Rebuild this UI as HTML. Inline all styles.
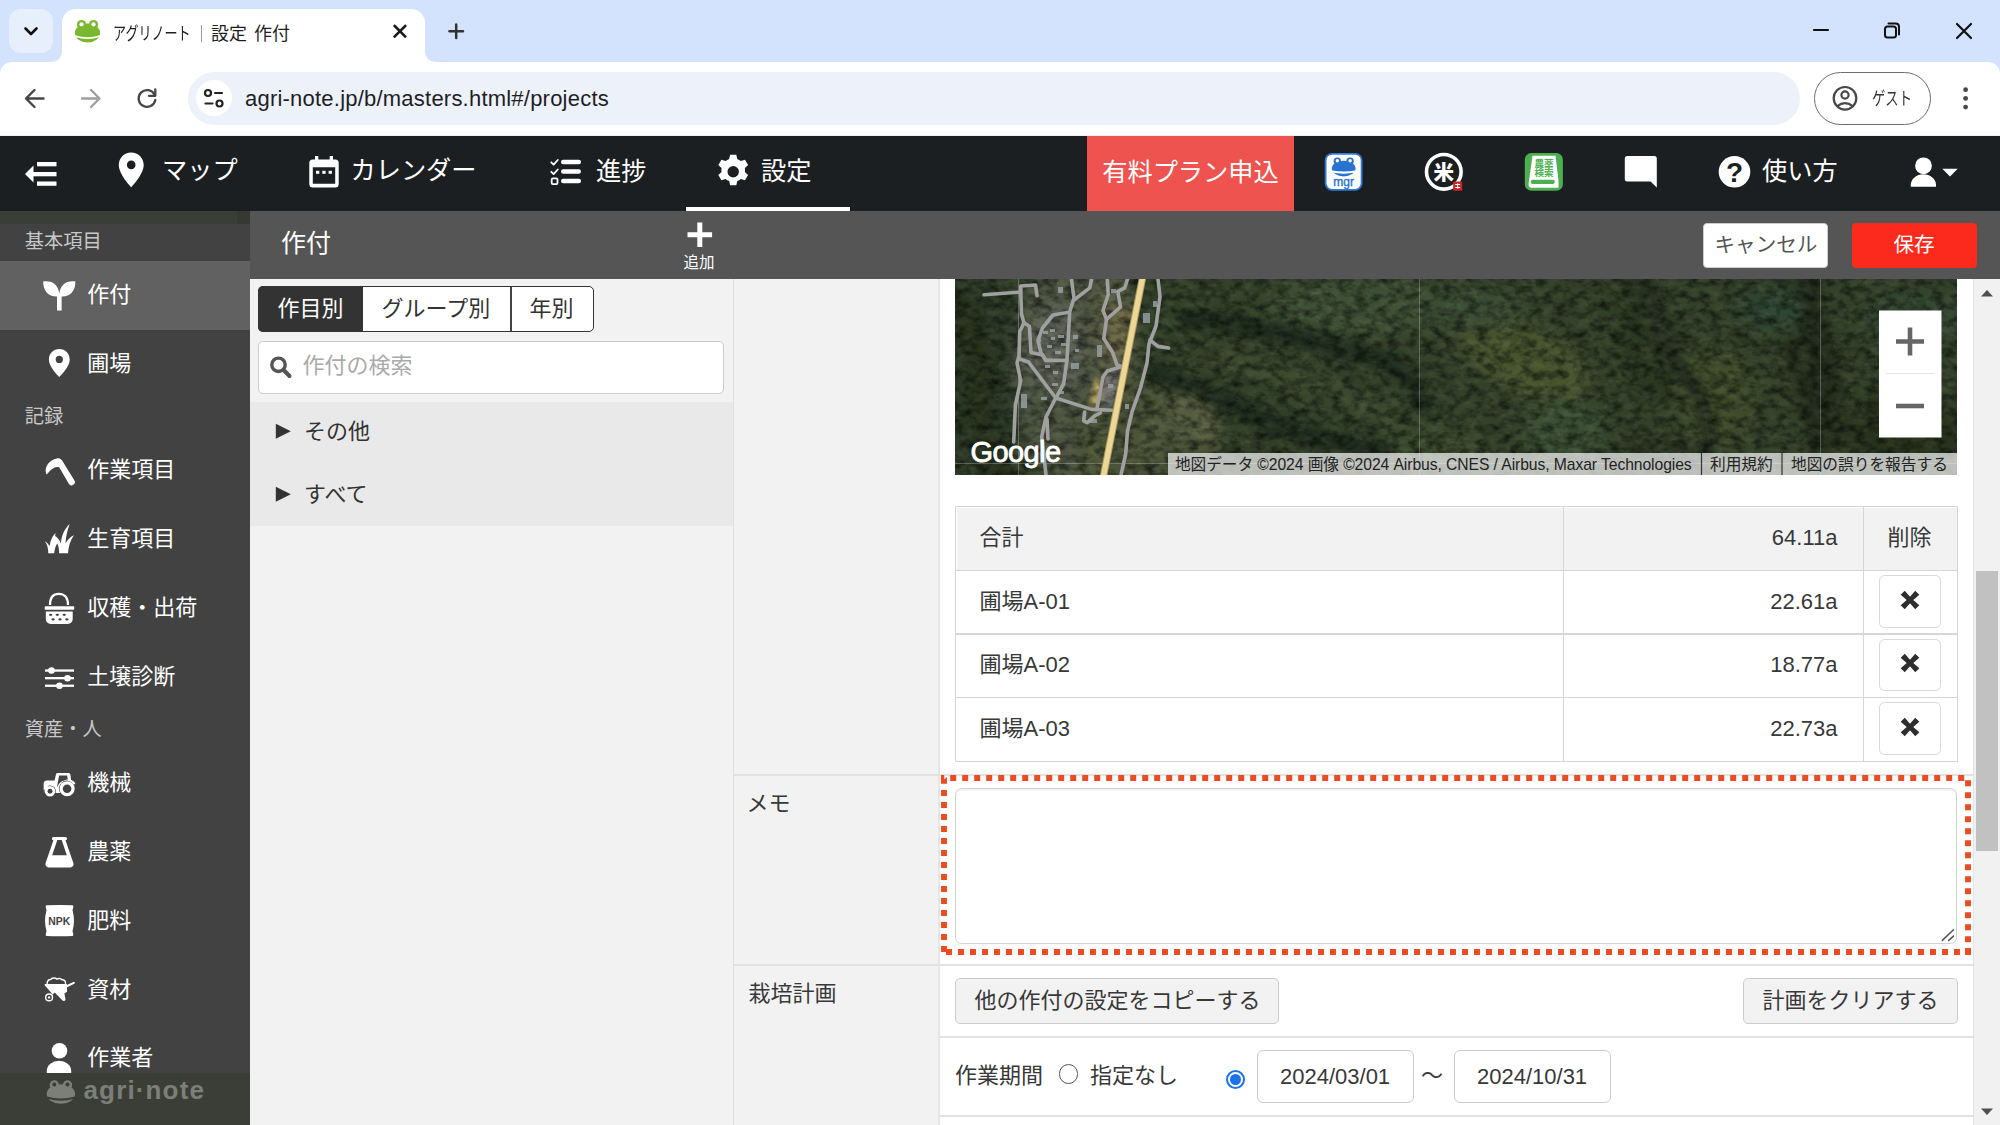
<!DOCTYPE html>
<html lang="ja">
<head>
<meta charset="utf-8">
<title>アグリノート | 設定 作付</title>
<style>
*{box-sizing:border-box;margin:0;padding:0}
html,body{width:2000px;height:1125px;overflow:hidden;background:#fff}
body{position:relative;font-family:"Liberation Sans","Noto Sans CJK JP",sans-serif;color:#333;-webkit-font-smoothing:antialiased}
.abs{position:absolute}
.t{position:absolute;white-space:nowrap;line-height:1}
svg{position:absolute;overflow:visible}
/* chrome */
#tabstrip{left:0;top:0;width:2000px;height:90px;background:#d3e3fd}
#toolbar{left:0;top:62px;width:2000px;height:75px;background:#fff;border-radius:12px 12px 0 0}
#tab{left:62px;top:9px;width:363px;height:53px;background:#fff;border-radius:14px 14px 0 0}
#tabsearch{left:9.400px;top:9.400px;width:43.600px;height:43.600px;border-radius:12px;background:#e7effd}
#urlbar{left:188px;top:72px;width:1612px;height:52.800px;border-radius:26.400px;background:#edf1fa}
#sitebtn{left:196px;top:80px;width:36px;height:36px;border-radius:18px;background:#fff}
#guest{left:1814px;top:72px;width:117px;height:53px;border-radius:27px;border:1.800px solid #6e6e6e;background:#fff}
/* app nav */
#nav{left:0;top:135.400px;width:2000px;height:75.600px;background:#1c1f21;border-top:1px solid #f0f0ee}
.navt{color:#fff;font-size:25.200px}
#paid{left:1087.200px;top:136.400px;width:206.800px;height:74.600px;background:#ef5350}
#underline{left:686px;top:207px;width:164px;height:4px;background:#fff}
/* sidebar */
#side{left:0;top:211px;width:250px;height:914px;background:#424242}
#sidetop{left:0;top:211px;width:250px;height:13px;background:#3b3e37}
#sideactive{left:0;top:261px;width:250px;height:69px;background:#616161}
#sidefoot{left:0;top:1073px;width:250px;height:52px;background:#3b3e37}
.sh{color:#c8c8c8;font-size:19.250px;left:24.800px}
.si{color:#fff;font-size:22px;left:87.300px}
/* header */
#head{left:250px;top:211px;width:1750px;height:68px;background:#555}
#cancel{left:1703px;top:223px;width:125px;height:45px;background:#fff;border-radius:4px;border:1px solid #ccc}
#save{left:1852px;top:223px;width:125px;height:45px;background:#fb2a1c;border-radius:4px}
/* list panel */
#list{left:250px;top:279px;width:483px;height:846px;background:#f2f2f2}
#listitems{left:250px;top:402px;width:483px;height:124px;background:#e9e9e9}
#seg{left:258px;top:286px;width:336px;height:46px;border:1.5px solid #333;border-radius:5px;background:#fff;overflow:hidden}
#seg1{left:258px;top:286px;width:105px;height:46px;background:#333;border-radius:5px 0 0 5px}
#search{left:258px;top:341px;width:466px;height:53px;background:#fff;border:1.5px solid #ccc;border-radius:5px}
/* form */
#labelcol{left:732.500px;top:279px;width:207.500px;height:846px;background:#f2f2f2;border-left:1.500px solid #e0e0e0;border-right:2px solid #e6e6e6}
#scroll{left:1972.500px;top:279px;width:27.500px;height:846px;background:#f1f1f1;border-left:1.500px solid #e4e4e4}
#thumb{left:1976.300px;top:571.300px;width:21.600px;height:280px;background:#c1c1c1}
.hl{position:absolute;height:1.800px;background:#e2e2e2}
.cell{position:absolute;border:1.5px solid #d4d4d4}
.xbtn{position:absolute;width:61.800px;height:52.800px;border:1.600px solid #d9d9d9;border-radius:5.500px;background:#fff}
.btn{position:absolute;height:46px;border:1.5px solid #ccc;border-radius:5px;background:#f2f2f2}
.inp{position:absolute;height:53px;border:1.5px solid #ccc;border-radius:6px;background:#fff}
.ft{font-size:22px;color:#383838}
</style>
</head>
<body>
<!-- CHROME -->
<div id="tabstrip" class="abs"></div>
<div id="toolbar" class="abs"></div>
<div id="tabsearch" class="abs"></div>
<div id="tab" class="abs"></div>
<div id="urlbar" class="abs"></div>
<div id="sitebtn" class="abs"></div>
<div id="guest" class="abs"></div>

<!-- chrome curve joins -->
<svg style="left:0;top:0" width="2000" height="137" viewBox="0 0 2000 137">
  <path d="M50 62 Q62 62 62 50 L62 62 Z" fill="#fff"/>
  <path d="M437 62 Q425 62 425 50 L425 62 Z" fill="#fff"/>
  <!-- tab search chevron -->
  <path d="M25.5 28.5 L31 34 L36.5 28.5" fill="none" stroke="#111" stroke-width="2.6" stroke-linecap="round" stroke-linejoin="round"/>
  <!-- favicon frog -->
  <g fill="#7cb82f">
    <circle cx="81.5" cy="24.5" r="4.6"/><circle cx="93.5" cy="24.5" r="4.6"/>
    <ellipse cx="87.5" cy="33" rx="12.6" ry="9.6"/>
  </g>
  <circle cx="81.5" cy="24.3" r="2.1" fill="#fff"/><circle cx="93.5" cy="24.3" r="2.1" fill="#fff"/>
  <path d="M75.2 35.2 Q87.5 39.2 99.8 35.2 L99.8 37 Q87.5 41 75.2 37 Z" fill="#fff"/>
  <!-- tab close -->
  <path d="M394.700 26 L405.100 36.400 M405.100 26 L394.700 36.400" stroke="#1a1a1a" stroke-width="2.600" stroke-linecap="square"/>
  <!-- new tab plus -->
  <path d="M449.400 31.200 H463 M456.200 24.400 V38" stroke="#333" stroke-width="2.500" stroke-linecap="round"/>
  <!-- window controls -->
  <path d="M1814 30 H1828" stroke="#111" stroke-width="2.2" stroke-linecap="round"/>
  <rect x="1885" y="26.5" width="11" height="11" rx="2.5" fill="none" stroke="#111" stroke-width="2"/>
  <path d="M1888.5 23.6 H1895.5 Q1899 23.6 1899 27 V34.5" fill="none" stroke="#111" stroke-width="2" stroke-linecap="round"/>
  <path d="M1957 24 L1971 38 M1971 24 L1957 38" stroke="#111" stroke-width="2.2" stroke-linecap="round"/>
  <!-- back -->
  <path d="M43.5 98.5 H26.5 M34.5 90 L26 98.5 L34.5 107" fill="none" stroke="#474747" stroke-width="2.4" stroke-linecap="round" stroke-linejoin="round"/>
  <!-- forward -->
  <path d="M82 98.5 H99 M91 90 L99.5 98.5 L91 107" fill="none" stroke="#a0a0a0" stroke-width="2.4" stroke-linecap="round" stroke-linejoin="round"/>
  <!-- reload -->
  <path d="M155.300 100 A8.400 8.400 0 1 1 154.600 94.800" fill="none" stroke="#474747" stroke-width="2.300" stroke-linecap="round"/>
  <path d="M155.300 89.300 V95.800 H149" fill="none" stroke="#474747" stroke-width="2.300" stroke-linecap="round" stroke-linejoin="round"/>
  <!-- tune icon -->
  <g fill="none" stroke="#222" stroke-width="2.2" stroke-linecap="round">
    <circle cx="208" cy="93" r="3"/><path d="M215 93 H222"/>
    <circle cx="219.500" cy="103.500" r="3"/><path d="M205.500 103.500 H212.500"/>
  </g>
  <!-- guest avatar -->
  <g fill="none" stroke="#474747" stroke-width="2.2">
    <circle cx="1845" cy="98.300" r="11.300"/>
    <circle cx="1845" cy="95" r="3.600"/>
    <path d="M1837 106.300 Q1845 100 1853 106.300"/>
  </g>
  <!-- kebab -->
  <circle cx="1965.600" cy="89.700" r="2.400" fill="#474747"/><circle cx="1965.600" cy="98.400" r="2.400" fill="#474747"/><circle cx="1965.600" cy="107.100" r="2.400" fill="#474747"/>
</svg>
<div class="t" id="tabtitle" style="left:113px;top:24.500px;font-size:18px;color:#1f1f1f;transform:scaleX(0.725);transform-origin:0 0">アグリノート</div>
<div class="abs" style="left:200.500px;top:25px;width:1.300px;height:16.500px;background:#9a9a9a"></div>
<div class="t" id="tabtitle2" style="left:211px;top:24.500px;font-size:18px;color:#1f1f1f;word-spacing:2px">設定 作付</div>
<div class="t" id="urltext" style="left:245px;top:87.500px;font-size:22px;letter-spacing:0.220px;color:#1f1f1f">agri-note.jp/b/masters.html#/projects</div>
<div class="t" id="guesttext" style="left:1872px;top:90px;font-size:18px;color:#333;transform:scaleX(0.740);transform-origin:0 0">ゲスト</div>
<!-- NAV -->
<div id="nav" class="abs"></div>
<div id="paid" class="abs"></div>
<div id="underline" class="abs"></div>

<!-- nav icons -->
<svg style="left:0;top:137px" width="2000" height="74" viewBox="0 137 2000 74">
 <g fill="#fff">
  <!-- back-menu -->
  <rect x="37" y="162" width="19.5" height="4.3"/><rect x="33" y="172" width="23.5" height="4.3"/><rect x="37" y="181.500" width="19.5" height="4.3"/>
  <path d="M25 174 L33.500 165.500 V182.500 Z"/>
  <!-- map pin -->
  <path d="M131.200 152.500 C124.300 152.500 118.800 158 118.800 164.900 C118.800 174.200 131.200 187.200 131.200 187.200 C131.200 187.200 143.700 174.200 143.700 164.900 C143.700 158 138.100 152.500 131.200 152.500 Z M131.200 169.200 A4.300 4.300 0 1 1 131.200 160.600 A4.300 4.300 0 1 1 131.200 169.200 Z" fill-rule="evenodd"/>
  <!-- calendar -->
  <path d="M315 156 h3.300 v3.500 h11.400 v-3.500 h3.300 v3.500 h2.200 a3.500 3.500 0 0 1 3.500 3.500 v21 a3.500 3.500 0 0 1 -3.500 3.500 h-22.400 a3.500 3.500 0 0 1 -3.500 -3.500 v-21 a3.500 3.500 0 0 1 3.500 -3.500 h2.200 Z M312.800 167.200 v16.500 h22.400 v-16.500 Z" fill-rule="evenodd"/>
  <rect x="316" y="170.800" width="3.300" height="3"/><rect x="322.300" y="170.800" width="3.300" height="3"/><rect x="328.600" y="170.800" width="3.300" height="3"/>
  <!-- tasks -->
  <rect x="561" y="159.700" width="20" height="4.600" rx="2.300"/><rect x="561" y="169.200" width="20" height="4.600" rx="2.300"/><rect x="561" y="178.700" width="20" height="4.600" rx="2.300"/>
  <!-- gear -->
  <g transform="translate(733.200 171.800) scale(1.19)">
   <path id="gearp" fill-rule="evenodd" d="M-2.600 -14.400 h5.200 l0.800 3.600 a11 11 0 0 1 3 1.750 l3.500 -1.150 l2.600 4.500 l-2.700 2.500 a11 11 0 0 1 0 3.400 l2.700 2.500 l-2.600 4.500 l-3.500 -1.150 a11 11 0 0 1 -3 1.750 l-0.800 3.600 h-5.200 l-0.800 -3.600 a11 11 0 0 1 -3 -1.750 l-3.500 1.150 l-2.600 -4.500 l2.700 -2.500 a11 11 0 0 1 0 -3.400 l-2.700 -2.500 l2.600 -4.500 l3.500 1.150 a11 11 0 0 1 3 -1.750 Z M0 -4.800 a4.800 4.800 0 1 0 0 9.600 a4.800 4.800 0 1 0 0 -9.600 Z"/>
  </g>
  <!-- chat -->
  <path d="M1627.300 156 h27 a2.500 2.500 0 0 1 2.500 2.500 v29 l-6.200 -6 h-23.300 a2.500 2.500 0 0 1 -2.500 -2.500 v-20.500 a2.500 2.500 0 0 1 2.500 -2.500 Z"/>
  <!-- help -->
  <circle cx="1734.500" cy="171.800" r="15.800"/>
  <!-- user -->
  <circle cx="1923.500" cy="165.800" r="8.400"/>
  <path d="M1910.800 186.800 v-2 a12.600 10.500 0 0 1 25.200 0 v2 Z"/>
  <path d="M1942.300 168.800 h15.400 l-7.700 7.600 Z"/>
 </g>
 <!-- tasks checks -->
 <g fill="none" stroke="#fff" stroke-width="1.800" stroke-linecap="round" stroke-linejoin="round">
  <path d="M551.300 162.300 l2.300 2.300 l4.200 -4.600"/><path d="M551.300 171.800 l2.300 2.300 l4.200 -4.600"/>
  <rect x="551.700" y="178.300" width="5.800" height="5.800" rx="1.200"/>
 </g>
 <!-- mgr icon -->
 <rect x="1325.600" y="153.800" width="36" height="36" rx="6.500" fill="#fff" stroke="#2e7bd9" stroke-width="1.800"/>
 <g fill="#2873d0">
  <circle cx="1337.300" cy="161.200" r="3.700"/><circle cx="1350.100" cy="161.200" r="3.700"/>
  <ellipse cx="1343.700" cy="168.600" rx="11.900" ry="7.800"/>
 </g>
 <circle cx="1337.300" cy="160.800" r="1.700" fill="#fff"/><circle cx="1350.100" cy="160.800" r="1.700" fill="#fff"/>
 <path d="M1332.200 170.600 Q1343.700 172.600 1355.200 170.600 L1355.300 172.600 Q1343.700 174.700 1332.100 172.600 Z" fill="#fff"/>
 <text x="1343.700" y="186.200" font-family="Liberation Sans, sans-serif" font-size="12" fill="#2873d0" stroke="#2873d0" stroke-width="0.350" text-anchor="middle">mgr</text>
 <!-- kome icon -->
 <circle cx="1443.800" cy="171.800" r="17.300" fill="none" stroke="#fff" stroke-width="3.600"/>
 <text x="1443.800" y="179.600" font-family="Liberation Sans, Noto Sans CJK JP, sans-serif" font-size="20.500" font-weight="900" fill="#fff" text-anchor="middle">米</text>
 <rect x="1453.200" y="181.400" width="9" height="9.300" rx="1" fill="#d0202a"/>
 <path d="M1455.200 184.500 h5 M1455.200 187.500 h5 M1457.700 183.400 v5.300" stroke="#fff" stroke-width="1"/>
 <!-- nouyaku kensaku -->
 <rect x="1524.800" y="153" width="38.100" height="37.700" rx="6.500" fill="#4caf50"/>
 <path d="M1532.500 155.800 h23 l3 25 v7 h-27 a3 3 0 0 1 -3 -3.500 Z" fill="#fff"/>
 <rect x="1530.800" y="179.800" width="24" height="4.200" rx="2" fill="#4caf50"/>
 <text x="1544" y="167.200" font-family="Liberation Sans, Noto Sans CJK JP, sans-serif" font-size="9.600" font-weight="bold" fill="#4caf50" text-anchor="middle">農薬</text>
 <text x="1544" y="176" font-family="Liberation Sans, Noto Sans CJK JP, sans-serif" font-size="9.600" font-weight="bold" fill="#4caf50" text-anchor="middle">検索</text>
 <!-- help ? -->
 <text x="1734.500" y="182" font-family="Liberation Sans, sans-serif" font-size="28" font-weight="bold" fill="#1c1f21" text-anchor="middle">?</text>
</svg>
<div class="t navt" style="left:162px;top:158.300px">マップ</div>
<div class="t navt" style="left:350.500px;top:158.300px">カレンダー</div>
<div class="t navt" style="left:596px;top:158.500px">進捗</div>
<div class="t navt" style="left:761px;top:158.500px">設定</div>
<div class="t navt" style="left:1102.300px;top:160px">有料プラン申込</div>
<div class="t navt" style="left:1762px;top:158.500px">使い方</div>
<!-- SIDEBAR -->
<div id="side" class="abs"></div>
<div id="sidetop" class="abs"></div><div class="abs" style="left:237px;top:211px;width:13px;height:13px;background:#353931"></div>
<div id="sideactive" class="abs"></div>
<div id="sidefoot" class="abs"></div>

<!-- sidebar text -->
<div class="t sh" style="top:232.2px">基本項目</div>
<div class="t sh" style="top:407.2px">記録</div>
<div class="t sh" style="top:719.7px">資産・人</div>
<div class="t si" style="top:284.4px">作付</div>
<div class="t si" style="top:353.4px">圃場</div>
<div class="t si" style="top:459.4px">作業項目</div>
<div class="t si" style="top:528.4px">生育項目</div>
<div class="t si" style="top:596.9px">収穫・出荷</div>
<div class="t si" style="top:665.9px">土壌診断</div>
<div class="t si" style="top:772.4px">機械</div>
<div class="t si" style="top:840.9px">農薬</div>
<div class="t si" style="top:909.9px">肥料</div>
<div class="t si" style="top:978.9px">資材</div>
<div class="t si" style="top:1046.9px">作業者</div>
<svg style="left:0;top:211px" width="250" height="914" viewBox="0 211 250 914">
 <g fill="#fff">
  <!-- sprout -->
  <path d="M43.200 281.500 C52.500 280.300 58.200 285 59.300 293.500 C60.400 285 66.100 280.300 75.400 281.500 C75.600 291 70 296.800 61.600 296.500 V310.400 H57 V296.500 C48.600 296.800 43 291 43.200 281.500 Z"/>
  <!-- pin -->
  <path d="M59.300 349 C53.500 349 48.900 353.600 48.900 359.400 C48.900 367.200 59.300 376.900 59.300 376.900 C59.300 376.900 69.700 367.200 69.700 359.400 C69.700 353.600 65.100 349 59.300 349 Z M59.300 363 A3.600 3.600 0 1 1 59.300 355.800 A3.600 3.600 0 1 1 59.300 363 Z" fill-rule="evenodd"/>
  <!-- grass -->
  <path d="M44.700 541.200 C47 542.500 48.800 544.500 49.600 546.100 C50.500 540.500 52.500 535.500 55.600 533.200 L55.100 535.900 C57.500 537.500 59.500 540 60.900 543.400 C61.500 535.500 64.500 528.500 69.800 523.900 C67.500 529.500 66 536 65.400 543.400 C67.500 539.500 70.500 536.500 74 535.200 C70.500 540 68.500 546 68 553.200 L59.100 553.200 C59.200 549.500 58.500 546 57.300 543.400 C55.500 546 54.500 549.500 54.200 553.200 L48.200 553.200 C48.400 548 47 544 44.700 541.200 Z"/>
  <!-- basket -->
  <rect x="44.700" y="606.300" width="29.500" height="3.400" rx="0.800"/>
  <path d="M45.800 611.400 H72.700 V619 a4.900 4.900 0 0 1 -4.900 4.900 H50.700 a4.900 4.900 0 0 1 -4.900 -4.900 Z M49 614.8 a1.700 1.150 0 1 0 3.400 0 a1.700 1.150 0 1 0 -3.400 0 Z M55.6 614.8 a1.700 1.150 0 1 0 3.400 0 a1.700 1.150 0 1 0 -3.400 0 Z M62.5 614.8 a1.700 1.150 0 1 0 3.400 0 a1.700 1.150 0 1 0 -3.400 0 Z M51.4 619.4 a1.700 1.150 0 1 0 3.400 0 a1.700 1.150 0 1 0 -3.400 0 Z M58.3 619.4 a1.700 1.150 0 1 0 3.400 0 a1.700 1.150 0 1 0 -3.400 0 Z M65.2 619.4 a1.700 1.150 0 1 0 3.400 0 a1.700 1.150 0 1 0 -3.400 0 Z" fill-rule="evenodd"/>
  <!-- sliders -->
  <rect x="45" y="669.400" width="29" height="2.300"/><rect x="45" y="677" width="29" height="2.300"/><rect x="45" y="684.600" width="29" height="2.300"/>
  <circle cx="51.500" cy="670.500" r="3.300"/><circle cx="67.500" cy="678.200" r="3.300"/><circle cx="59.500" cy="685.800" r="3.300"/>
  <!-- tractor -->
  <path d="M46.900 780.400 H54.600 L56 774.300 Q56.300 772.900 57.800 772.900 H68.600 Q70.200 772.900 70.400 774.500 L71.100 780 Q74 781.200 75.400 783.600 L73.500 785 L67 792.900 H46.500 Q43.800 792.900 43.800 790.500 V783.500 Q43.800 780.400 46.900 780.400 Z"/>
  <path d="M59.100 775.600 H67.100 L67.800 779.600 C62.500 780.300 59 783 57.800 786.200 H57.100 Z" fill="#424242"/>
  <circle cx="67.100" cy="788.700" r="8.100" fill="#424242"/>
  <path d="M71.100 780 Q74 781.200 75.400 783.600 L73.800 784.600 Q71 780.800 67.100 780.400 Z"/>
  <circle cx="67.100" cy="788.700" r="7.550"/><circle cx="67.100" cy="788.700" r="4.300" fill="#424242"/>
  <circle cx="50" cy="791.300" r="5.900" fill="#424242"/>
  <rect x="43.800" y="783" width="4" height="6.500"/>
  <circle cx="50" cy="791.300" r="5.300"/><circle cx="50" cy="791.300" r="2.450" fill="#424242"/>
  <!-- flask -->
  <path d="M53.700 836.900 H65.200 a1.700 1.700 0 0 1 0.300 3.400 L73.200 862.500 a3.300 3.300 0 0 1 -3 4.900 H48.800 a3.300 3.300 0 0 1 -3 -4.900 L53.400 840.300 a1.700 1.700 0 0 1 0.300 -3.400 Z M57.300 840 H61.700 L66.800 855.200 H52.200 Z" fill-rule="evenodd"/>
  <!-- npk bag -->
  <path d="M46.500 905.300 Q59.500 904.500 72.500 905.300 Q73.500 905.500 73.300 906.800 L72.800 909.300 Q72.200 910 72.600 910.600 Q75.300 921 72.600 930.700 Q72.200 931.400 72.800 932 L73.300 934.500 Q73.500 935.700 72.500 935.900 Q59.500 936.700 46.500 935.900 Q45.500 935.700 45.700 934.500 L46.200 932 Q46.800 931.400 46.400 930.700 Q43.700 921 46.400 910.600 Q46.800 910 46.200 909.300 L45.700 906.800 Q45.500 905.500 46.500 905.300 Z"/>
  <!-- wheelbarrow -->
  <path d="M44.700 984 H66.900 L67.100 991.700 L64.400 993.400 L65.600 1000 Q64.200 1001.400 62.500 1000.600 L54.700 992.600 L52.600 994.600 L51.200 992.800 L44.700 985.300 Z"/>
  <path d="M66.800 986.300 L73.800 982.900" stroke="#fff" stroke-width="2.100" stroke-linecap="round"/>
  <path d="M47.300 983.800 C46.800 981 48.500 979.600 50.500 979.600 C52 977.600 55 977.300 56.800 979 C58.500 978 61 978.500 61.800 979.700 C64 979.300 65.800 981 65.500 983.800" fill="none" stroke="#fff" stroke-width="1.500"/>
  <circle cx="49.100" cy="997.400" r="3.400" fill="none" stroke="#fff" stroke-width="1.400"/><circle cx="49.100" cy="997.400" r="1.200"/>
  <!-- worker -->
  <circle cx="59.500" cy="1050.800" r="7.800"/>
  <path d="M46.800 1073 v-2 a12.200 10.200 0 0 1 24.400 0 v2 Z"/>
 </g>
 <!-- sickle -->
 <path d="M45.900 473.300 C44.600 465.500 49.500 460.200 56.800 458.400 C60 457.900 62.200 459.800 63.200 462.300 L74.300 480.300 A3.200 3.200 0 0 1 68.800 483.800 L59.200 467.200 C55 465.800 50.800 469.300 47.400 473.800 C46.800 474.400 46.100 474.200 45.900 473.300 Z" fill="#fff"/>
 <!-- basket handle -->
 <path d="M50 604.900 C50 597 54 593.800 58.900 593.800 C63.800 593.800 68 597 68 604.900" fill="none" stroke="#fff" stroke-width="2.300"/>
 <text x="59.300" y="924.600" font-family="Liberation Sans, sans-serif" font-size="10.400" font-weight="bold" fill="#424242" text-anchor="middle">NPK</text>
 <!-- footer logo -->
 <g fill="#7c7f78">
  <circle cx="54.300" cy="1085" r="4.700"/><circle cx="67.500" cy="1085" r="4.700"/>
  <ellipse cx="60.900" cy="1094" rx="14.200" ry="9.800"/>
 </g>
 <circle cx="54.300" cy="1084.600" r="2" fill="#3b3e37"/><circle cx="67.500" cy="1084.600" r="2" fill="#3b3e37"/>
 <path d="M47 1096.500 Q60.900 1100.500 74.800 1096.500 L74.800 1098.700 Q60.900 1102.700 47 1098.700 Z" fill="#3b3e37"/>
 <text x="83.500" y="1098.600" font-family="Liberation Sans, sans-serif" font-size="26" font-weight="bold" fill="#7c7f78" letter-spacing="1.150">agri·note</text>
</svg>
<!-- HEADER -->
<div id="head" class="abs"></div>
<div id="cancel" class="abs"></div>
<div id="save" class="abs"></div>
<!-- LIST -->
<div id="list" class="abs"></div>
<div id="listitems" class="abs"></div>
<div id="seg" class="abs"></div>
<div id="seg1" class="abs"></div>
<div id="search" class="abs"></div>

<!-- header text -->
<div class="t" style="left:281px;top:230.500px;font-size:25px;color:#fff">作付</div>
<svg style="left:686px;top:221px" width="28" height="28" viewBox="0 0 28 28"><path d="M11.300 1.500 h5 v9.800 h9.800 v5 h-9.800 v9.800 h-5 v-9.800 h-9.800 v-5 h9.800 Z" fill="#fff"/></svg>
<div class="t" style="left:683.500px;top:255px;font-size:15.500px;color:#fff">追加</div>
<div class="t" style="left:1714.500px;top:235px;font-size:20.600px;color:#555">キャンセル</div>
<div class="t" style="left:1893.500px;top:234.700px;font-size:20.600px;color:#fff">保存</div>
<!-- list text -->
<div class="t" style="left:277.500px;top:298px;font-size:22px;color:#fff">作目別</div>
<div class="t" style="left:381.500px;top:298px;font-size:22px;color:#333">グループ別</div>
<div class="t" style="left:529.500px;top:298px;font-size:22px;color:#333">年別</div>
<div class="abs" style="left:510px;top:287px;width:1.500px;height:44px;background:#444"></div>
<svg style="left:268px;top:354px" width="26" height="26" viewBox="0 0 26 26"><circle cx="10.500" cy="10.800" r="6.700" fill="none" stroke="#555" stroke-width="3.400"/><path d="M15.500 16 L21.500 22" stroke="#555" stroke-width="4" stroke-linecap="round"/></svg>
<div class="t" style="left:302.500px;top:354.500px;font-size:22px;color:#aaa">作付の検索</div>
<svg style="left:275px;top:423px" width="17" height="17" viewBox="0 0 17 17"><path d="M0.800 0.800 L15.800 8.300 L0.800 15.800 Z" fill="#333"/></svg>
<svg style="left:275px;top:485.500px" width="17" height="17" viewBox="0 0 17 17"><path d="M0.800 0.800 L15.800 8.300 L0.800 15.800 Z" fill="#333"/></svg>
<div class="t" style="left:304px;top:421px;font-size:22px;color:#333">その他</div>
<div class="t" style="left:304px;top:483.500px;font-size:22px;color:#333">すべて</div>
<!-- FORM -->
<div id="labelcol" class="abs"></div>
<div id="scroll" class="abs"></div>
<div id="thumb" class="abs"></div>

<svg style="left:955px;top:279px;overflow:hidden" width="1002" height="196" viewBox="0 0 1002 196">
 <defs>
  <filter id="tex" x="0" y="0" width="100%" height="100%">
   <feTurbulence type="fractalNoise" baseFrequency="0.09 0.13" numOctaves="3" seed="7" result="n"/>
   <feColorMatrix in="n" type="matrix" values="0 0 0 0 0  0 0 0 0 0  0 0 0 0 0  1.3 0 0 0 -0.5"/>
  </filter>
  <filter id="tex2" x="0" y="0" width="100%" height="100%">
   <feTurbulence type="fractalNoise" baseFrequency="0.07 0.1" numOctaves="3" seed="23" result="n"/>
   <feColorMatrix in="n" type="matrix" values="0 0 0 0 1  0 0 0 0 1  0 0 0 0 0.6  0 1.6 0 0 -0.66"/>
  </filter>
  <filter id="b6"><feGaussianBlur stdDeviation="6"/></filter>
  <filter id="b10"><feGaussianBlur stdDeviation="7"/></filter>
  <filter id="b3"><feGaussianBlur stdDeviation="2.500"/></filter>
  <filter id="b4"><feGaussianBlur stdDeviation="4"/></filter>
 </defs>
 <rect width="1002" height="196" fill="#33412a"/>
 <!-- large-scale light/dark areas -->
 <g filter="url(#b10)">
  <ellipse cx="28" cy="100" rx="42" ry="100" fill="#2c3926"/>
  <ellipse cx="120" cy="90" rx="62" ry="120" fill="#4d5443"/>
  <ellipse cx="100" cy="70" rx="28" ry="45" fill="#5d6257"/>
  <ellipse cx="160" cy="60" rx="22" ry="60" fill="#5c5f45"/>
  <ellipse cx="230" cy="150" rx="35" ry="45" fill="#565d40"/>
  <ellipse cx="165" cy="150" rx="40" ry="60" fill="#4b5239"/>
  <ellipse cx="215" cy="165" rx="30" ry="30" fill="#4e563b"/>
  <ellipse cx="400" cy="28" rx="90" ry="30" fill="#3d5035"/>
  <ellipse cx="300" cy="185" rx="90" ry="14" fill="#2a3622"/>
  <ellipse cx="480" cy="170" rx="50" ry="22" fill="#3b4b2f"/>
  <ellipse cx="570" cy="80" rx="70" ry="35" fill="#46522f" transform="rotate(25 570 80)"/>
  <ellipse cx="520" cy="30" rx="50" ry="20" fill="#3a4e36"/>
  <ellipse cx="610" cy="150" rx="40" ry="30" fill="#3a4f36"/>
  <ellipse cx="690" cy="60" rx="30" ry="70" fill="#2b3722" transform="rotate(-15 690 60)"/>
  <ellipse cx="760" cy="120" rx="40" ry="50" fill="#3e4b2c"/>
  <ellipse cx="860" cy="90" rx="25" ry="90" fill="#252f1e" transform="rotate(-10 860 90)"/>
  <ellipse cx="820" cy="30" rx="40" ry="22" fill="#2f4530"/>
  <ellipse cx="950" cy="150" rx="60" ry="40" fill="#28331f"/>
  <ellipse cx="960" cy="40" rx="50" ry="25" fill="#334731"/>
  <ellipse cx="700" cy="180" rx="60" ry="20" fill="#2a3620"/>
 </g>
<g filter="url(#b4)">
  <path d="M231 38 Q340 52 435 84 Q462 100 468 126" fill="none" stroke="#1f291b" stroke-width="18" stroke-linecap="round"/>
  <path d="M200 94 Q260 114 315 144 Q370 162 425 172" fill="none" stroke="#1f291c" stroke-width="18" stroke-linecap="round"/>
  <path d="M255 78 Q350 98 440 140" fill="none" stroke="#3a4a2e" stroke-width="22" stroke-linecap="round"/>
  <path d="M690 0 Q700 60 740 110 Q760 150 750 196" fill="none" stroke="#263120" stroke-width="16" stroke-linecap="round"/>
  <path d="M850 0 Q870 80 860 170" fill="none" stroke="#222c1d" stroke-width="18" stroke-linecap="round"/>
  <path d="M0 20 Q30 60 20 120 Q25 160 50 196" fill="none" stroke="#27321f" stroke-width="26" stroke-linecap="round"/>
 </g>
  <!-- fields along the road -->
 <g filter="url(#b3)">
  <path d="M160 30 L180 30 L172 75 L150 75 Z" fill="#6d6b48"/>
  <path d="M140 100 L148 100 L143 128 L135 128 Z" fill="#c2ae66"/>
  <path d="M150 95 L166 92 L158 128 L146 128 Z" fill="#7a7a78"/>
  <path d="M135 140 L155 140 L148 196 L120 196 Z" fill="#4d5638"/>
  <path d="M85 40 L112 38 L108 100 L84 95 Z" fill="#5b6155"/>
 </g>
 <!-- texture -->
 <rect width="1002" height="196" fill="#101a10" filter="url(#tex)"/>
 <rect width="1002" height="196" fill="#fff" filter="url(#tex2)" opacity="0.090"/>
 <!-- tile grid -->
 <g stroke="#fff" stroke-opacity="0.250" stroke-width="1">
  <path d="M63.500 0 V196 M464.500 0 V196 M865.500 0 V196 M0 184.500 H1002"/>
 </g>
 <!-- roads -->
 <g fill="none" stroke="#a0a0a0" stroke-width="3.600" stroke-linejoin="round" stroke-linecap="round"><path d="M203 0 L205 17.5 L201 47 L194 65 L192 84 L185.6 108.6 L177 133 L172.5 152 L170.7 175 L166 196"/><path d="M195 61 L203 67.4 L213.6 69"/><path d="M65.7 10.5 L66.5 35 L69 43.8 L64.8 52.5 L64 77 L62 84 L65.7 101.6 L60.4 126 L58.7 163"/><path d="M29 15.8 L65.7 13 L65.7 7 L80.5 6 L82 16.6"/><path d="M69 43.8 L74.4 47.3 L76 73.5 L87.5 76 L91 81.4 L112 81.4"/><path d="M113.8 33.3 L98 36 L87.5 49 L83 61.3 L85.8 73.5 L91 81.4"/><path d="M116.4 0 L119 19 L114.7 33 L112 80.5 L108.6 105 L99.8 120.8 L91 138 L86.7 157.6 L91 196"/><path d="M136.6 0 L134.8 8.8 L119 21"/><path d="M64 79.7 L73.5 83 L100.7 119 L136.6 130.4 L157.6 131.3"/><path d="M152.3 0 L153.2 15.8 L148 31.5 L151.5 40.3 L148.8 59.5 L157.6 73.5 L162 85.8 L167.2 87.6"/><path d="M172.5 0 L169.8 8.8 L162.8 12.3 L165.5 28 L151.5 40.3"/><path d="M167.2 87.6 L152.3 92 L148 98 L141.8 130.4"/><path d="M129.6 133 L128.7 141.8 L132.2 143.6 L140 136.6 L145.3 134"/><path d="M92 140 L93 160"/></g>
 <path d="M187.500 -1 L148.500 197" stroke="#a89866" stroke-width="7.400" fill="none"/>
 <path d="M187.500 -1 L148.500 197" stroke="#ecd794" stroke-width="5.400" fill="none"/>
 <!-- houses -->
 <g fill="#9aa3a8" opacity="0.800">
  <rect x="95" y="50" width="5" height="3"/><rect x="103" y="56" width="6" height="3"/><rect x="92" y="66" width="5" height="3"/><rect x="100" y="72" width="6" height="3"/>
  <rect x="116" y="84" width="8" height="6"/><rect x="97" y="104" width="6" height="3"/><rect x="66" y="115" width="6" height="14"/><rect x="142" y="66" width="5" height="12"/>
  <rect x="118" y="56" width="5" height="4"/><rect x="188" y="34" width="7" height="10"/><rect x="86" y="118" width="6" height="3"/><rect x="133" y="140" width="9" height="4"/><rect x="88" y="52" width="5" height="3"/><rect x="106" y="64" width="5" height="3"/><rect x="96" y="58" width="4" height="3"/><rect x="90" y="86" width="5" height="3"/><rect x="98" y="92" width="5" height="3"/><rect x="104" y="112" width="5" height="3"/><rect x="120" y="70" width="4" height="3"/><rect x="82" y="60" width="4" height="3"/><rect x="170" y="125" width="4" height="5"/><rect x="153" y="105" width="5" height="4"/><rect x="156" y="10" width="5" height="4"/><rect x="103" y="8" width="5" height="6"/><rect x="198" y="22" width="4" height="6"/>
 </g>
 <!-- Google logo -->
 <text x="15.500" y="182.500" font-family="Liberation Sans, sans-serif" font-size="29" fill="#fff" letter-spacing="-0.600" stroke="#fff" stroke-width="0.800">Google</text>
 <!-- attribution -->
 <rect x="213" y="174" width="789" height="22" fill="#f5f5f5" fill-opacity="0.720"/>
 <path d="M746.500 174 V196 M827 174 V196" stroke="#333" stroke-width="1.200"/>
 <!-- zoom control -->
 <rect x="924" y="31.500" width="62.500" height="127" fill="#fff"/>
 <path d="M931 94.500 H979.500" stroke="#e6e6e6" stroke-width="1.200"/>
 <path d="M941 62.500 H969 M955 48.500 V76.500" stroke="#666" stroke-width="4.600"/>
 <path d="M941 127 H969" stroke="#666" stroke-width="4.600"/>
</svg>
<div class="t" id="attr1" style="left:1175px;top:456.500px;font-size:15.700px;letter-spacing:-0.080px;color:#222">地図データ ©2024 画像 ©2024 Airbus, CNES / Airbus, Maxar Technologies</div>
<div class="t" id="attr2" style="left:1710px;top:456.500px;font-size:15.700px;color:#222">利用規約</div>
<div class="t" id="attr3" style="left:1791px;top:456.500px;font-size:15.700px;color:#222">地図の誤りを報告する</div>


<div class="abs" style="left:955px;top:506px;width:1003px;height:256px;background:#fff;border:1.500px solid #d6d6d6"></div>
<div class="abs" style="left:956.500px;top:507.500px;width:1000px;height:62px;background:#f2f2f2"></div>
<div class="abs" style="left:955px;top:569.500px;width:1003px;height:1.500px;background:#d6d6d6"></div>
<div class="abs" style="left:955px;top:633px;width:1003px;height:1.500px;background:#d6d6d6"></div>
<div class="abs" style="left:955px;top:696.500px;width:1003px;height:1.500px;background:#d6d6d6"></div>
<div class="abs" style="left:1562.500px;top:506px;width:1.500px;height:256px;background:#d6d6d6"></div>
<div class="abs" style="left:1862.500px;top:506px;width:1.500px;height:256px;background:#d6d6d6"></div>
<div class="t ft" style="left:979.500px;top:526.500px">合計</div>
<div class="t ft" style="left:979.500px;top:590.500px">圃場A-01</div>
<div class="t ft" style="left:979.500px;top:654px">圃場A-02</div>
<div class="t ft" style="left:979.500px;top:717.500px">圃場A-03</div>
<div class="t ft" style="right:162.500px;top:526.500px">64.11a</div>
<div class="t ft" style="right:162.500px;top:590.500px">22.61a</div>
<div class="t ft" style="right:162.500px;top:654px">18.77a</div>
<div class="t ft" style="right:162.500px;top:717.500px">22.73a</div>
<div class="t ft" style="left:1887.500px;top:526.500px">削除</div>
<div class="xbtn" style="left:1879px;top:575px"></div>
<div class="xbtn" style="left:1879px;top:638.500px"></div>
<div class="xbtn" style="left:1879px;top:702px"></div>
<svg style="left:1895px;top:584.7px" width="30" height="30" viewBox="-15 -15 30 30"><g transform="rotate(45)" fill="#2e2e2e"><path d="M-10.300 -2.900 L0 -2.200 L10.300 -2.900 V2.900 L0 2.200 L-10.300 2.900 Z"/><path d="M-2.900 -10.300 L-2.200 0 L-2.900 10.300 H2.900 L2.200 0 L2.900 -10.300 Z"/></g></svg>
<svg style="left:1895px;top:648.2px" width="30" height="30" viewBox="-15 -15 30 30"><g transform="rotate(45)" fill="#2e2e2e"><path d="M-10.300 -2.900 L0 -2.200 L10.300 -2.900 V2.900 L0 2.200 L-10.300 2.900 Z"/><path d="M-2.900 -10.300 L-2.200 0 L-2.900 10.300 H2.900 L2.200 0 L2.900 -10.300 Z"/></g></svg>
<svg style="left:1895px;top:711.7px" width="30" height="30" viewBox="-15 -15 30 30"><g transform="rotate(45)" fill="#2e2e2e"><path d="M-10.300 -2.900 L0 -2.200 L10.300 -2.900 V2.900 L0 2.200 L-10.300 2.900 Z"/><path d="M-2.900 -10.300 L-2.200 0 L-2.900 10.300 H2.900 L2.200 0 L2.900 -10.300 Z"/></g></svg>


<div class="hl" style="left:734px;top:773.800px;width:1238.500px"></div>
<div class="hl" style="left:734px;top:964.200px;width:1238.500px"></div>
<div class="hl" style="left:939px;top:1036px;width:1033.500px"></div>
<div class="hl" style="left:939px;top:1114.800px;width:1033.500px"></div>
<div class="t ft" style="left:746.500px;top:792.500px">メモ</div>
<div class="t ft" style="left:748.500px;top:983px">栽培計画</div>
<div class="abs" style="left:955px;top:787.500px;width:1002px;height:156.500px;border:1.500px solid #d2d2d2;border-radius:6.500px;background:#fff;box-shadow:inset 0 1.500px 1.500px rgba(0,0,0,0.06)"></div>
<svg style="left:1935px;top:925px" width="25" height="20" viewBox="1935 925 25 20"><path d="M1942.300 940.400 L1953.500 929.800 M1948.700 940.400 L1953.500 936.100" stroke="#555" stroke-width="1.500" stroke-linecap="round"/></svg>
<svg style="left:935px;top:770px" width="1040" height="190" viewBox="935 770 1040 190"><g stroke="#ee4b23" fill="none" stroke-width="5.900" stroke-dasharray="6 6"><path d="M950.200 777.950 H1964.200"/><path d="M944 790.100 V952.100"/><path d="M946 952 H1960"/><path d="M1968 780.200 V950"/></g><path d="M941 775 h3.200 v4.500 l2.800 -2.800 v7.100 h-6 Z" fill="#ee4b23"/><rect x="1965" y="948.200" width="6" height="6.800" fill="#ee4b23"/></svg>


<div class="btn" style="left:955px;top:978px;width:324px"></div>
<div class="btn" style="left:1743px;top:978px;width:214.500px"></div>
<div class="t ft" style="left:974.500px;top:990px">他の作付の設定をコピーする</div>
<div class="t ft" style="left:1762.500px;top:990px">計画をクリアする</div>
<div class="t ft" style="left:955px;top:1065px">作業期間</div>
<div class="abs" style="left:1058.500px;top:1064px;width:19.500px;height:19.500px;border-radius:50%;border:1.500px solid #555;background:#fff"></div>
<div class="t ft" style="left:1090px;top:1065px">指定なし</div>
<div class="abs" style="left:1225.500px;top:1069.500px;width:19px;height:19px;border-radius:50%;border:2px solid #1a73e8;background:#fff"></div>
<div class="abs" style="left:1229.500px;top:1073.500px;width:11px;height:11px;border-radius:50%;background:#1a73e8"></div>
<div class="inp" style="left:1257px;top:1050px;width:156.500px"></div>
<div class="inp" style="left:1454px;top:1050px;width:156.500px"></div>
<div class="t ft" style="left:1280px;top:1065.500px">2024/03/01</div>
<div class="t ft" style="left:1477px;top:1065.500px">2024/10/31</div>
<div class="t ft" style="left:1421px;top:1065px">～</div>
<!-- scroll arrows -->
<svg style="left:1972px;top:279px" width="28" height="846" viewBox="0 0 28 846"><path d="M9 17.500 L15 11 L21 17.500 Z" fill="#505050"/><path d="M9 829.500 L15 836 L21 829.500 Z" fill="#505050"/></svg>

<!--TEXT-->
<!--ICONS-->
</body>
</html>
